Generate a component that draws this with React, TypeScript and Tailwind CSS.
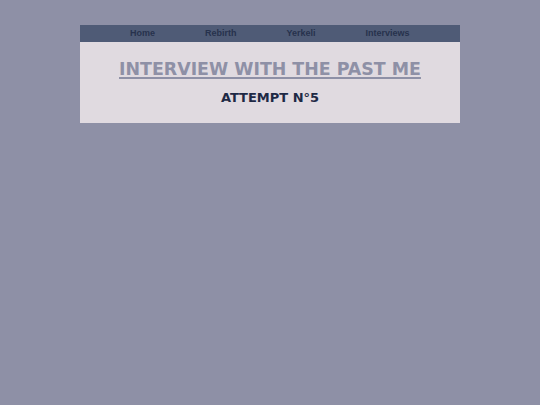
export default function App() {
  const links = ['Home', 'Rebirth', 'Yerkeli', 'Interviews']
  return (
    <div className="min-h-[405px] w-full bg-[#8e90a6] pt-[25px]">
      <div className="mx-auto w-[380px]">
        <nav className="flex h-[17px] items-center gap-[50px] bg-[#4f5b76] pl-[50px] font-['Liberation_Sans',Arial,sans-serif] text-[9px] font-bold text-[#27324d]">
          {links.map((l) => (
            <a key={l} href="#" className="leading-none">
              {l}
            </a>
          ))}
        </nav>
        <div className="flex h-[81px] flex-col items-center bg-[#e0dae0] pt-[16px] font-['DejaVu_Sans',Verdana,sans-serif] font-bold">
          <h1 className="text-[17.4px] leading-[22px] text-[#8e90a6] underline decoration-[2px] underline-offset-[2px]">
            INTERVIEW WITH THE PAST ME
          </h1>
          <h2 className="mt-[10px] text-[13px] leading-[16px] text-[#1e2945]">ATTEMPT N°5</h2>
        </div>
      </div>
    </div>
  )
}
